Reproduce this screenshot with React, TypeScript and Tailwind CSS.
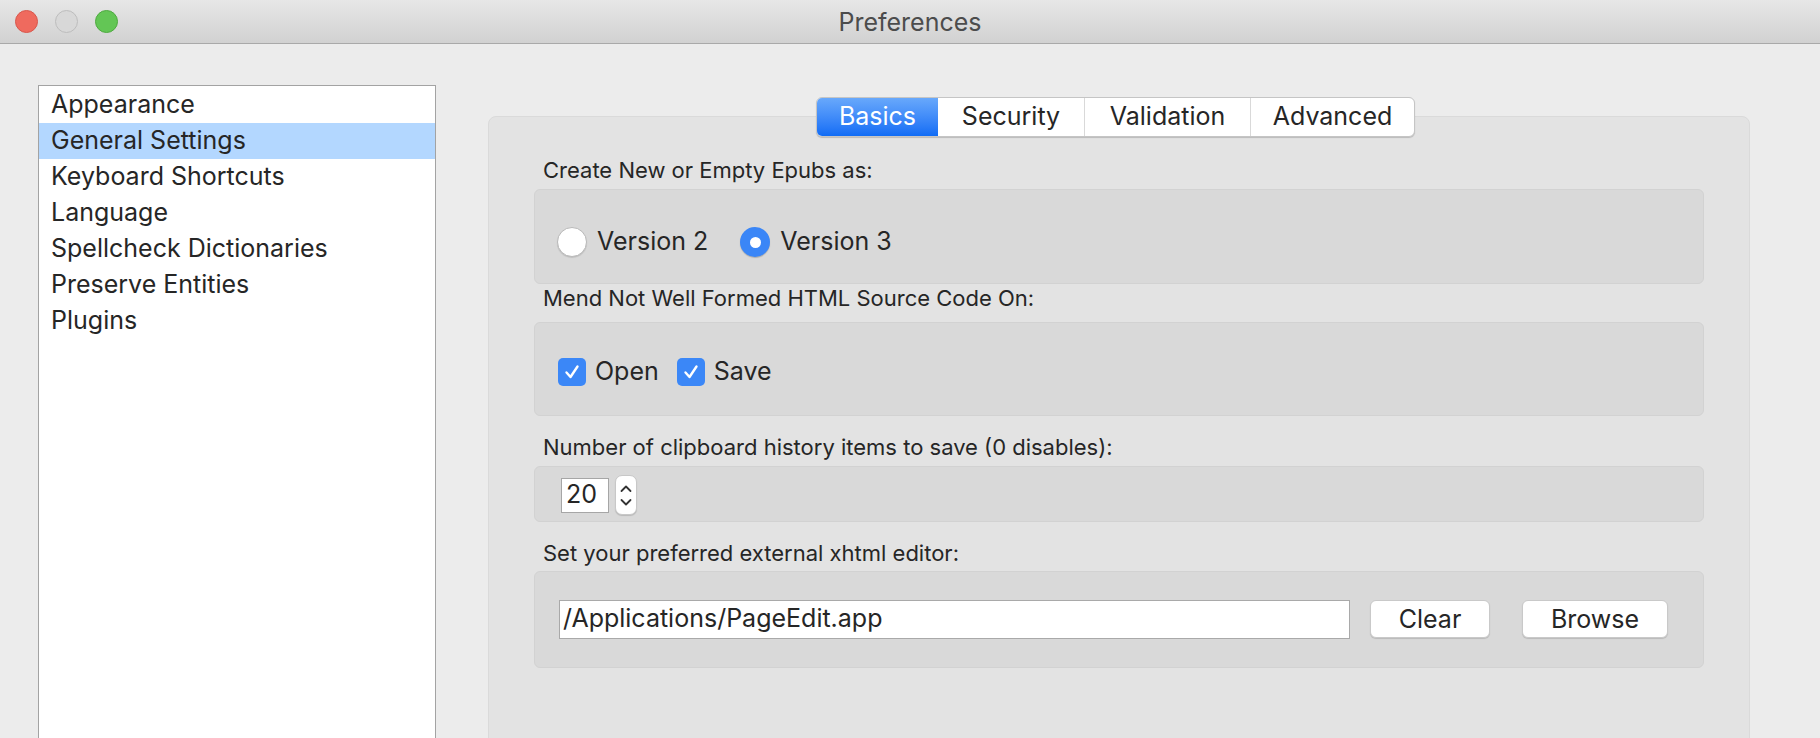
import { useState } from "react";

const font = "font-['Inter','Noto_Sans',sans-serif]";

const sections = [
  "Appearance",
  "General Settings",
  "Keyboard Shortcuts",
  "Language",
  "Spellcheck Dictionaries",
  "Preserve Entities",
  "Plugins",
];

const tabs = [
  { name: "Basics", w: "w-[121px]" },
  { name: "Security", w: "w-[146px]" },
  { name: "Validation", w: "w-[166px]" },
  { name: "Advanced", w: "w-[164px]" },
];

function Radio({ checked, label }: { checked: boolean; label: string }) {
  return (
    <label className="flex items-center gap-[10px]">
      {checked ? (
        <span className="w-[30px] h-[30px] rounded-full bg-[#3a86f7] flex items-center justify-center shadow-[0_1px_1px_rgba(0,0,0,0.2)]">
          <span className="w-[11px] h-[11px] rounded-full bg-white" />
        </span>
      ) : (
        <span className="w-[30px] h-[30px] rounded-full bg-white border border-[#b9b9b9] shadow-[0_1px_1px_rgba(0,0,0,0.12)]" />
      )}
      <span className="text-[25px] text-[#262626]">{label}</span>
    </label>
  );
}

function Check({ label }: { label: string }) {
  return (
    <label className="flex items-center gap-[9px]">
      <span className="w-[28px] h-[28px] rounded-[5px] bg-[#3b87f7] flex items-center justify-center">
        <svg width="18" height="18" viewBox="0 0 18 18" fill="none">
          <path d="M3.5 9.5 L7.5 14 L14.5 3.5" stroke="white" strokeWidth="2.4" strokeLinecap="round" strokeLinejoin="round" />
        </svg>
      </span>
      <span className="text-[25px] text-[#262626]">{label}</span>
    </label>
  );
}

function Label({ children, mt }: { children: string; mt: string }) {
  return (
    <div className={`h-[24px] shrink-0 flex items-center pl-[9px] pt-[4px] text-[22px] text-[#262626] ${mt}`}>{children}</div>
  );
}

export default function App() {
  const [active, setActive] = useState(1);
  const [tab, setTab] = useState(0);

  return (
    <div className={`w-[1820px] h-[738px] bg-[#ececec] overflow-hidden flex flex-col ${font}`}>
      {/* title bar */}
      <div className="h-[44px] shrink-0 grid grid-cols-[1fr_auto_1fr] items-center bg-gradient-to-b from-[#e7e7e7] to-[#d1d1d1] border-b border-[#a9a9a9]">
        <div className="flex items-center gap-[17px] pl-[15px]">
          <span className="w-[23px] h-[23px] rounded-full bg-[#ef6a5e] border border-[#d8574c]" />
          <span className="w-[23px] h-[23px] rounded-full bg-[#d8d8d8] border border-[#bdbdbd]" />
          <span className="w-[23px] h-[23px] rounded-full bg-[#63c655] border border-[#4eaa40]" />
        </div>
        <div className="text-[25px] text-[#4c4c4c] pt-[3px]">Preferences</div>
        <div />
      </div>

      <div className="flex flex-1 min-h-0">
        {/* section list */}
        <div className="ml-[38px] mt-[41px] w-[398px] h-[700px] shrink-0 bg-white border border-[#a3a3a3] pt-[1px]">
          {sections.map((s, i) => (
            <div
              key={s}
              onClick={() => setActive(i)}
              className={`h-[36px] flex items-center pl-[12px] text-[25px] text-[#262626] ${i === active ? "bg-[#b3d7ff]" : ""}`}
            >
              {s}
            </div>
          ))}
        </div>

        {/* settings pane */}
        <div className="ml-[52px] mt-[53px] w-[1262px] shrink-0 flex flex-col">
          <div className="relative z-10 shrink-0 flex justify-center pr-[7px]">
            <div className="flex h-[40px] rounded-[6px] border border-[#c5c5c5] bg-white shadow-[0_1px_1px_rgba(0,0,0,0.18)] overflow-hidden">
              {tabs.map((t, i) => (
                <button
                  key={t.name}
                  onClick={() => setTab(i)}
                  className={`${t.w} h-full flex items-center justify-center text-[25px] ${
                    i === tab
                      ? "bg-gradient-to-b from-[#68a8fb] to-[#0f6cf5] text-white"
                      : "text-[#262626]"
                  } ${i > 0 && i !== tab && i - 1 !== tab ? "border-l border-[#d9d9d9]" : ""}`}
                >
                  {t.name}
                </button>
              ))}
            </div>
          </div>

          <div className="-mt-[21px] h-[700px] shrink-0 rounded-[8px] bg-[#e3e3e3] border border-[#dadada] px-[45px] pt-[39px] flex flex-col">
            <Label mt="">Create New or Empty Epubs as:</Label>
            <div className="mt-[9px] h-[95px] shrink-0 rounded-[6px] bg-[#d9d9d9] border border-[#d2d2d2] flex items-center gap-[32px] pl-[22px] pt-[11px]">
              <Radio checked={false} label="Version 2" />
              <Radio checked label="Version 3" />
            </div>

            <Label mt="">Mend Not Well Formed HTML Source Code On:</Label>
            <div className="mt-[14px] h-[94px] shrink-0 rounded-[6px] bg-[#d9d9d9] border border-[#d2d2d2] flex items-center gap-[18px] pl-[23px] pt-[6px]">
              <Check label="Open" />
              <Check label="Save" />
            </div>

            <Label mt="mt-[17px]">Number of clipboard history items to save (0 disables):</Label>
            <div className="mt-[9px] h-[56px] shrink-0 rounded-[6px] bg-[#d9d9d9] border border-[#d2d2d2] flex items-center gap-[6px] pl-[26px] pt-[2px]">
              <div className="w-[48px] h-[35px] bg-white border border-[#a6a6a6] flex items-center pl-[4px] text-[25px] text-[#262626]">
                20
              </div>
              <div className="w-[22px] h-[40px] rounded-[7px] bg-white border border-[#c8c8c8] shadow-[0_1px_1px_rgba(0,0,0,0.15)] flex flex-col items-center justify-center gap-[5px]">
                <svg width="14" height="9" viewBox="0 0 14 9" fill="none">
                  <path d="M2.5 7 L7 2.5 L11.5 7" stroke="#333" strokeWidth="1.8" strokeLinecap="round" strokeLinejoin="round" />
                </svg>
                <svg width="14" height="9" viewBox="0 0 14 9" fill="none">
                  <path d="M2.5 2 L7 6.5 L11.5 2" stroke="#333" strokeWidth="1.8" strokeLinecap="round" strokeLinejoin="round" />
                </svg>
              </div>
            </div>

            <Label mt="mt-[17px]">Set your preferred external xhtml editor:</Label>
            <div className="mt-[8px] h-[97px] shrink-0 rounded-[6px] bg-[#d9d9d9] border border-[#d2d2d2] flex items-center pl-[24px] pb-[1px]">
              <div className="w-[791px] h-[39px] bg-white border border-[#a9a9a9] flex items-center pl-[3px] text-[25px] text-[#262626]">
                /Applications/PageEdit.app
              </div>
              <button className="ml-[20px] w-[120px] h-[38px] rounded-[6px] bg-white border border-[#c9c9c9] shadow-[0_1px_1px_rgba(0,0,0,0.15)] text-[25px] text-[#262626]">
                Clear
              </button>
              <button className="ml-[32px] w-[146px] h-[38px] rounded-[6px] bg-white border border-[#c9c9c9] shadow-[0_1px_1px_rgba(0,0,0,0.15)] text-[25px] text-[#262626]">
                Browse
              </button>
            </div>
          </div>
        </div>
      </div>
    </div>
  );
}
